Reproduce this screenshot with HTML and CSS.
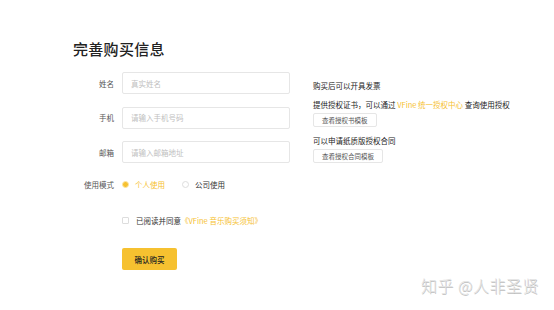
FILE: index.html
```html
<!DOCTYPE html>
<html lang="zh-CN">
<head>
    <meta charset="UTF-8">
    <title>完善购买信息</title>
    <link rel="stylesheet" href="styles.css">
</head>
<body>
    <div class="page">
        <h1 class="page-title">完善购买信息</h1>
        <div class="purchase">
            <div class="form">
                <div class="form-row">
                    <label class="form-label">姓名</label>
                    <input class="form-input" type="text" placeholder="真实姓名">
                </div>
                <div class="form-row">
                    <label class="form-label">手机</label>
                    <input class="form-input" type="text" placeholder="请输入手机号码">
                </div>
                <div class="form-row">
                    <label class="form-label">邮箱</label>
                    <input class="form-input" type="text" placeholder="请输入邮箱地址">
                </div>
                <div class="mode-row">
                    <span class="form-label">使用模式</span>
                    <div class="radios">
                        <span class="radio active"><i class="dot"></i>个人使用</span>
                        <span class="radio"><i class="dot"></i>公司使用</span>
                    </div>
                </div>
                <div class="agree-row">
                    <i class="checkbox"></i>
                    <span>已阅读并同意</span><a class="link">《VFine 音乐购买须知》</a>
                </div>
                <div class="submit-row">
                    <button class="submit">确认购买</button>
                </div>
            </div>

            <div class="notes">
                <p class="note first">购买后可以开具发票</p>
                <p class="note">提供授权证书，可以通过 <a class="link">VFine 统一授权中心</a> 查询使用授权</p>
                <button class="ghost">查看授权书模板</button>
                <p class="note">可以申请纸质版授权合同</p>
                <button class="ghost">查看授权合同模板</button>
            </div>
        </div>
    </div>

    <div class="watermark">知乎 @人非圣贤</div>
</body>
</html>
```

FILE: styles.css
```css
:root {
    --yellow: #f6c130;
    --text-color: #333333;
    --label-color: #555555;
    --placeholder: #c0c0c0;
    --border-color: #e6e6e6;
}

* {
    margin: 0;
    padding: 0;
    box-sizing: border-box;
}

body {
    font-family: "Noto Sans CJK SC", "Noto Sans", sans-serif;
    color: var(--text-color);
    background-color: #ffffff;
    width: 554px;
    height: 310px;
    overflow: hidden;
    position: relative;
}

.page {
    padding: 38px 0 0 73px;
}

.page-title {
    font-size: 15px;
    font-weight: 500;
    line-height: 22px;
    color: #222222;
    letter-spacing: 0.3px;
}

.purchase {
    display: flex;
    margin-top: 12px;
}

.form {
    width: 240px;
    display: flex;
    flex-direction: column;
}

.form-row {
    display: flex;
    align-items: center;
    height: 22px;
    margin-bottom: 12.5px;
}

.form-label {
    width: 41px;
    margin-right: 8px;
    text-align: right;
    font-size: 7.5px;
    color: var(--label-color);
}

.form-input {
    width: 168px;
    height: 22px;
    border: 1px solid var(--border-color);
    border-radius: 2px;
    padding: 0 8px;
    font-family: inherit;
    font-size: 7.5px;
    color: var(--text-color);
    outline: none;
}

.form-input::placeholder {
    color: var(--placeholder);
}

.mode-row {
    display: flex;
    align-items: center;
    height: 22px;
    margin-top: -2px;
    margin-bottom: 18px;
}

.radios {
    display: flex;
    gap: 17px;
}

.radio {
    display: inline-flex;
    align-items: center;
    font-size: 7.5px;
    color: var(--text-color);
}

.radio .dot {
    width: 7px;
    height: 7px;
    border-radius: 50%;
    border: 1px solid #dddddd;
    margin-right: 6px;
}

.radio.active {
    color: var(--yellow);
}

.radio.active .dot {
    background-color: var(--yellow);
    border: 1.5px solid #fde6a6;
}

.agree-row {
    display: flex;
    align-items: center;
    padding-left: 49px;
    font-size: 7.5px;
    height: 14px;
}

.checkbox {
    width: 7px;
    height: 7px;
    border: 1px solid #dddddd;
    border-radius: 1px;
    margin-right: 7px;
}

.link {
    color: var(--yellow);
}

.submit-row {
    padding-left: 49px;
    margin-top: 16px;
}

.submit {
    width: 55px;
    height: 22px;
    border: none;
    border-radius: 2px;
    background-color: var(--yellow);
    color: #222222;
    font-family: inherit;
    font-size: 7.5px;
    font-weight: 500;
}

.notes {
    display: flex;
    flex-direction: column;
    align-items: flex-start;
}

.note {
    font-size: 7.5px;
    line-height: 10px;
    color: #222222;
    margin-top: 9px;
    margin-bottom: 3px;
}

.note.first {
    margin-top: 9px;
    margin-bottom: 0;
}

.ghost {
    height: 14px;
    padding: 0 8px;
    border: 1px solid var(--border-color);
    border-radius: 2px;
    background-color: #ffffff;
    font-family: inherit;
    font-size: 6.5px;
    color: #555555;
}

.watermark {
    position: absolute;
    right: 15px;
    bottom: 13px;
    font-size: 16px;
    font-weight: 300;
    color: #e2e2e2;
    text-shadow: 0.5px 0.5px 0 #bdbdbd;
    letter-spacing: 0.5px;
}
```
